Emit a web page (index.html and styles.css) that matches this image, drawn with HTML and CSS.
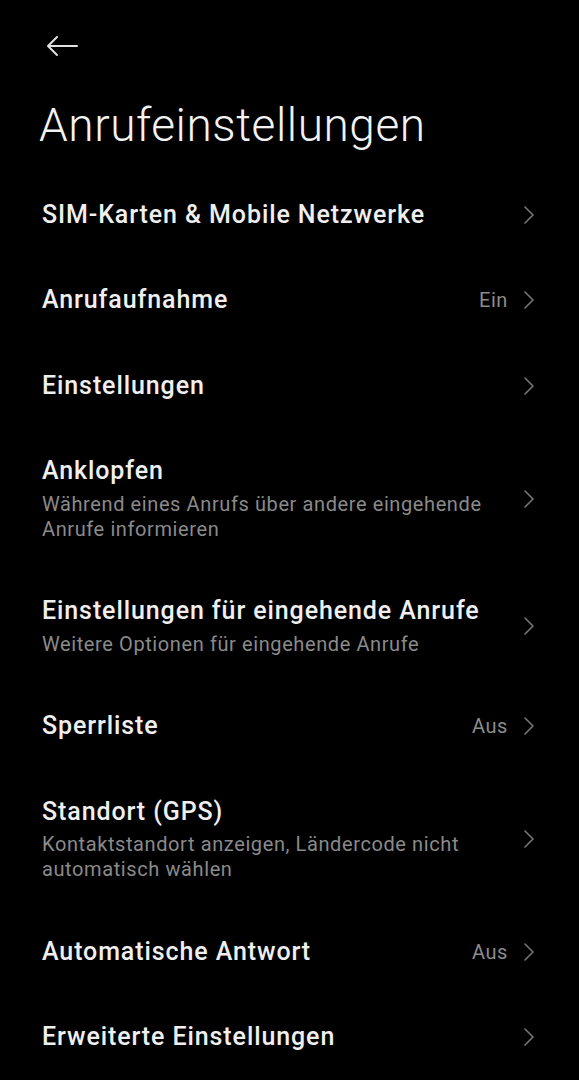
FILE: index.html
```html
<!DOCTYPE html>
<html lang="de">
  <head>
    <meta charset="UTF-8" />
    <title>Anrufeinstellungen</title>
    <meta name="viewport" content="width=device-width, initial-scale=1.0" />
    <link rel="stylesheet" href="styles.css">
  </head>
  <body>
    <div class="topbar">
      <svg class="back" width="32" height="22" viewBox="0 0 32 22">
        <path d="M31 11 H2 M11 2 L2 11 L11 20" fill="none" stroke="#e0e0e0" stroke-width="2" stroke-linecap="round" stroke-linejoin="round" />
      </svg>
    </div>

    <h1 class="page-title">Anrufeinstellungen</h1>

    <ul class="settings">
      <li class="row">
        <div class="row-text">
          <div class="row-title">SIM-Karten &amp; Mobile Netzwerke</div>
        </div>
        <div class="row-end">
          <svg class="chevron" width="12" height="18" viewBox="0 0 12 18"><path d="M2 1 L10 9 L2 17" /></svg>
        </div>
      </li>
      <li class="row">
        <div class="row-text">
          <div class="row-title">Anrufaufnahme</div>
        </div>
        <div class="row-end">
          <span class="row-value">Ein</span>
          <svg class="chevron" width="12" height="18" viewBox="0 0 12 18"><path d="M2 1 L10 9 L2 17" /></svg>
        </div>
      </li>
      <li class="row">
        <div class="row-text">
          <div class="row-title">Einstellungen</div>
        </div>
        <div class="row-end">
          <svg class="chevron" width="12" height="18" viewBox="0 0 12 18"><path d="M2 1 L10 9 L2 17" /></svg>
        </div>
      </li>
      <li class="row">
        <div class="row-text">
          <div class="row-title">Anklopfen</div>
          <div class="row-sub">Während eines Anrufs über andere eingehende Anrufe informieren</div>
        </div>
        <div class="row-end">
          <svg class="chevron" width="12" height="18" viewBox="0 0 12 18"><path d="M2 1 L10 9 L2 17" /></svg>
        </div>
      </li>
      <li class="row">
        <div class="row-text">
          <div class="row-title">Einstellungen für eingehende Anrufe</div>
          <div class="row-sub">Weitere Optionen für eingehende Anrufe</div>
        </div>
        <div class="row-end">
          <svg class="chevron" width="12" height="18" viewBox="0 0 12 18"><path d="M2 1 L10 9 L2 17" /></svg>
        </div>
      </li>
      <li class="row">
        <div class="row-text">
          <div class="row-title">Sperrliste</div>
        </div>
        <div class="row-end">
          <span class="row-value">Aus</span>
          <svg class="chevron" width="12" height="18" viewBox="0 0 12 18"><path d="M2 1 L10 9 L2 17" /></svg>
        </div>
      </li>
      <li class="row">
        <div class="row-text">
          <div class="row-title">Standort (GPS)</div>
          <div class="row-sub">Kontaktstandort anzeigen, Ländercode nicht automatisch wählen</div>
        </div>
        <div class="row-end">
          <svg class="chevron" width="12" height="18" viewBox="0 0 12 18"><path d="M2 1 L10 9 L2 17" /></svg>
        </div>
      </li>
      <li class="row">
        <div class="row-text">
          <div class="row-title">Automatische Antwort</div>
        </div>
        <div class="row-end">
          <span class="row-value">Aus</span>
          <svg class="chevron" width="12" height="18" viewBox="0 0 12 18"><path d="M2 1 L10 9 L2 17" /></svg>
        </div>
      </li>
      <li class="row">
        <div class="row-text">
          <div class="row-title">Erweiterte Einstellungen</div>
        </div>
        <div class="row-end">
          <svg class="chevron" width="12" height="18" viewBox="0 0 12 18"><path d="M2 1 L10 9 L2 17" /></svg>
        </div>
      </li>
    </ul>
  </body>
</html>
```

FILE: styles.css
```css
body {
  margin: 0;
  background: #000;
  color: #ededed;
  font-family: Roboto, "Noto Sans", sans-serif;
}

.topbar {
  height: 92px;
  padding-left: 46px;
  display: flex;
  align-items: center;
}

.back {
  display: block;
}

.page-title {
  margin: 5px 0 19px;
  padding-left: 39px;
  font-size: 46px;
  line-height: 56px;
  font-weight: 300;
  letter-spacing: 0.55px;
  color: #f2f2f2;
}

.settings {
  list-style: none;
  margin: 0;
  padding: 0;
}

.row {
  display: flex;
  align-items: center;
  padding: 26.75px 44px 26.75px 42px;
}

.row-text {
  flex: 1;
  min-width: 0;
  padding-right: 20px;
}

.row-title {
  font-size: 25px;
  line-height: 32px;
  font-weight: 500;
  letter-spacing: 0.9px;
  color: #efefef;
}

.row-sub {
  margin-top: 4.5px;
  font-size: 20px;
  line-height: 25px;
  letter-spacing: 0.6px;
  color: #8a8a8a;
}

.row-end {
  display: flex;
  align-items: center;
}

.row-value {
  font-size: 20px;
  letter-spacing: 0.6px;
  color: #8c8c8c;
  margin-right: 15px;
}

.chevron {
  display: block;
}

.chevron path {
  fill: none;
  stroke: #777;
  stroke-width: 1.6;
  stroke-linecap: round;
  stroke-linejoin: round;
}
```
